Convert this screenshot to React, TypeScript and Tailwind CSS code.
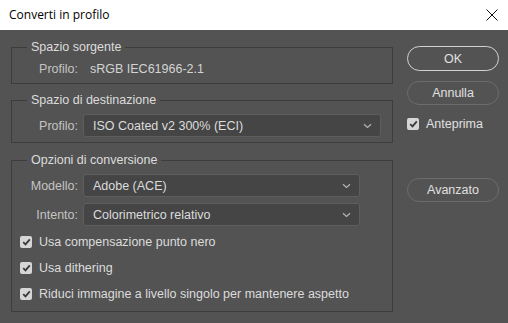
import React from "react";

const panelFont = { fontFamily: '"Liberation Sans", Arial, sans-serif' };

function Chevron() {
  return (
    <svg width="9" height="6" viewBox="0 0 9 6" className="shrink-0">
      <path d="M1 1.2 L4.5 4.5 L8 1.2" fill="none" stroke="#b4b4b4" strokeWidth="1.2" />
    </svg>
  );
}

function Checkbox() {
  return (
    <span className="flex h-[12px] w-[12px] shrink-0 items-center justify-center rounded-[2px] bg-[#d6d6d6]">
      <svg width="9" height="8" viewBox="0 0 9 8">
        <path d="M1.2 4.2 L3.5 6.4 L7.8 1.4" fill="none" stroke="#3a3a3a" strokeWidth="1.8" />
      </svg>
    </span>
  );
}

function SelectBox({ value, width }: { value: string; width: string }) {
  return (
    <div
      className={`flex h-[23px] items-center justify-between rounded-[3px] border border-[#5e5e5e] bg-[#454545] pl-[9px] pr-[8px] text-[#dcdcdc] ${width}`}
    >
      <span>{value}</span>
      <Chevron />
    </div>
  );
}

function Group({ title, children, className }: { title: string; children: React.ReactNode; className?: string }) {
  return (
    <fieldset className={`border border-[#3d3d3d] px-0 ${className ?? ""}`}>
      <legend className="ml-[15px] px-[4px] leading-[14px] text-[#dcdcdc]">{title}</legend>
      {children}
    </fieldset>
  );
}

function CheckRow({ label }: { label: string }) {
  return (
    <div className="flex h-[14px] items-center gap-[7px] pl-[8px] text-[#dcdcdc]">
      <Checkbox />
      <span className="whitespace-nowrap">{label}</span>
    </div>
  );
}

export default function App() {
  return (
    <div className="flex h-[323px] w-[508px] flex-col overflow-hidden bg-[#535353]">
      {/* Title bar */}
      <div className="flex h-[30px] shrink-0 items-center justify-between bg-white pl-[9px] pr-[10px]">
        <span className="text-[12px] text-black" style={{ fontFamily: '"Open Sans", "Noto Sans", sans-serif' }}>
          Converti in profilo
        </span>
        <svg width="12" height="12" viewBox="0 0 12 12">
          <path d="M0.5 0.5 L11.5 11.5 M11.5 0.5 L0.5 11.5" stroke="#111" strokeWidth="1" />
        </svg>
      </div>

      <div className="flex gap-[14px] pl-[11px] text-[12.5px] leading-[14px]" style={panelFont}>
        {/* Left column */}
        <div className="flex w-[382px] flex-col">
          <Group title="Spazio sorgente" className="mt-[10px] pb-[7px]">
            <div className="mt-[8px] flex items-center">
              <span className="w-[66px] text-right text-[#c4c4c4]">Profilo:</span>
              <span className="ml-[12px] text-[#d4d4d4]">sRGB IEC61966-2.1</span>
            </div>
          </Group>

          <Group title="Spazio di destinazione" className="mt-[9px] pb-[5px]">
            <div className="mt-[7px] flex items-center gap-[5px]">
              <span className="w-[66px] text-right text-[#c4c4c4]">Profilo:</span>
              <SelectBox value="ISO Coated v2 300% (ECI)" width="w-[298px]" />
            </div>
          </Group>

          <Group title="Opzioni di conversione" className="mt-[10px] pb-[10px]">
            <div className="mt-[7px] flex items-center gap-[5px]">
              <span className="w-[66px] text-right text-[#c4c4c4]">Modello:</span>
              <SelectBox value="Adobe (ACE)" width="w-[277px]" />
            </div>
            <div className="mt-[6px] flex items-center gap-[5px]">
              <span className="w-[66px] text-right text-[#c4c4c4]">Intento:</span>
              <SelectBox value="Colorimetrico relativo" width="w-[277px]" />
            </div>
            <div className="mt-[9px] flex flex-col gap-[12px]">
              <CheckRow label="Usa compensazione punto nero" />
              <CheckRow label="Usa dithering" />
              <CheckRow label="Riduci immagine a livello singolo per mantenere aspetto" />
            </div>
          </Group>
        </div>

        {/* Right column */}
        <div className="flex w-[92px] flex-col pt-[16px] text-[#e0e0e0]">
          <button className="flex h-[25px] items-center justify-center rounded-full border-[1.5px] border-[#d2d2d2]">
            OK
          </button>
          <button className="mt-[10px] flex h-[24px] items-center justify-center rounded-full border border-[#6c6c6c]">
            Annulla
          </button>
          <div className="mt-[12px] flex items-center gap-[7px]">
            <Checkbox />
            <span>Anteprima</span>
          </div>
          <button className="mt-[47px] flex h-[24px] items-center justify-center rounded-full border border-[#6c6c6c]">
            Avanzato
          </button>
        </div>
      </div>
    </div>
  );
}
